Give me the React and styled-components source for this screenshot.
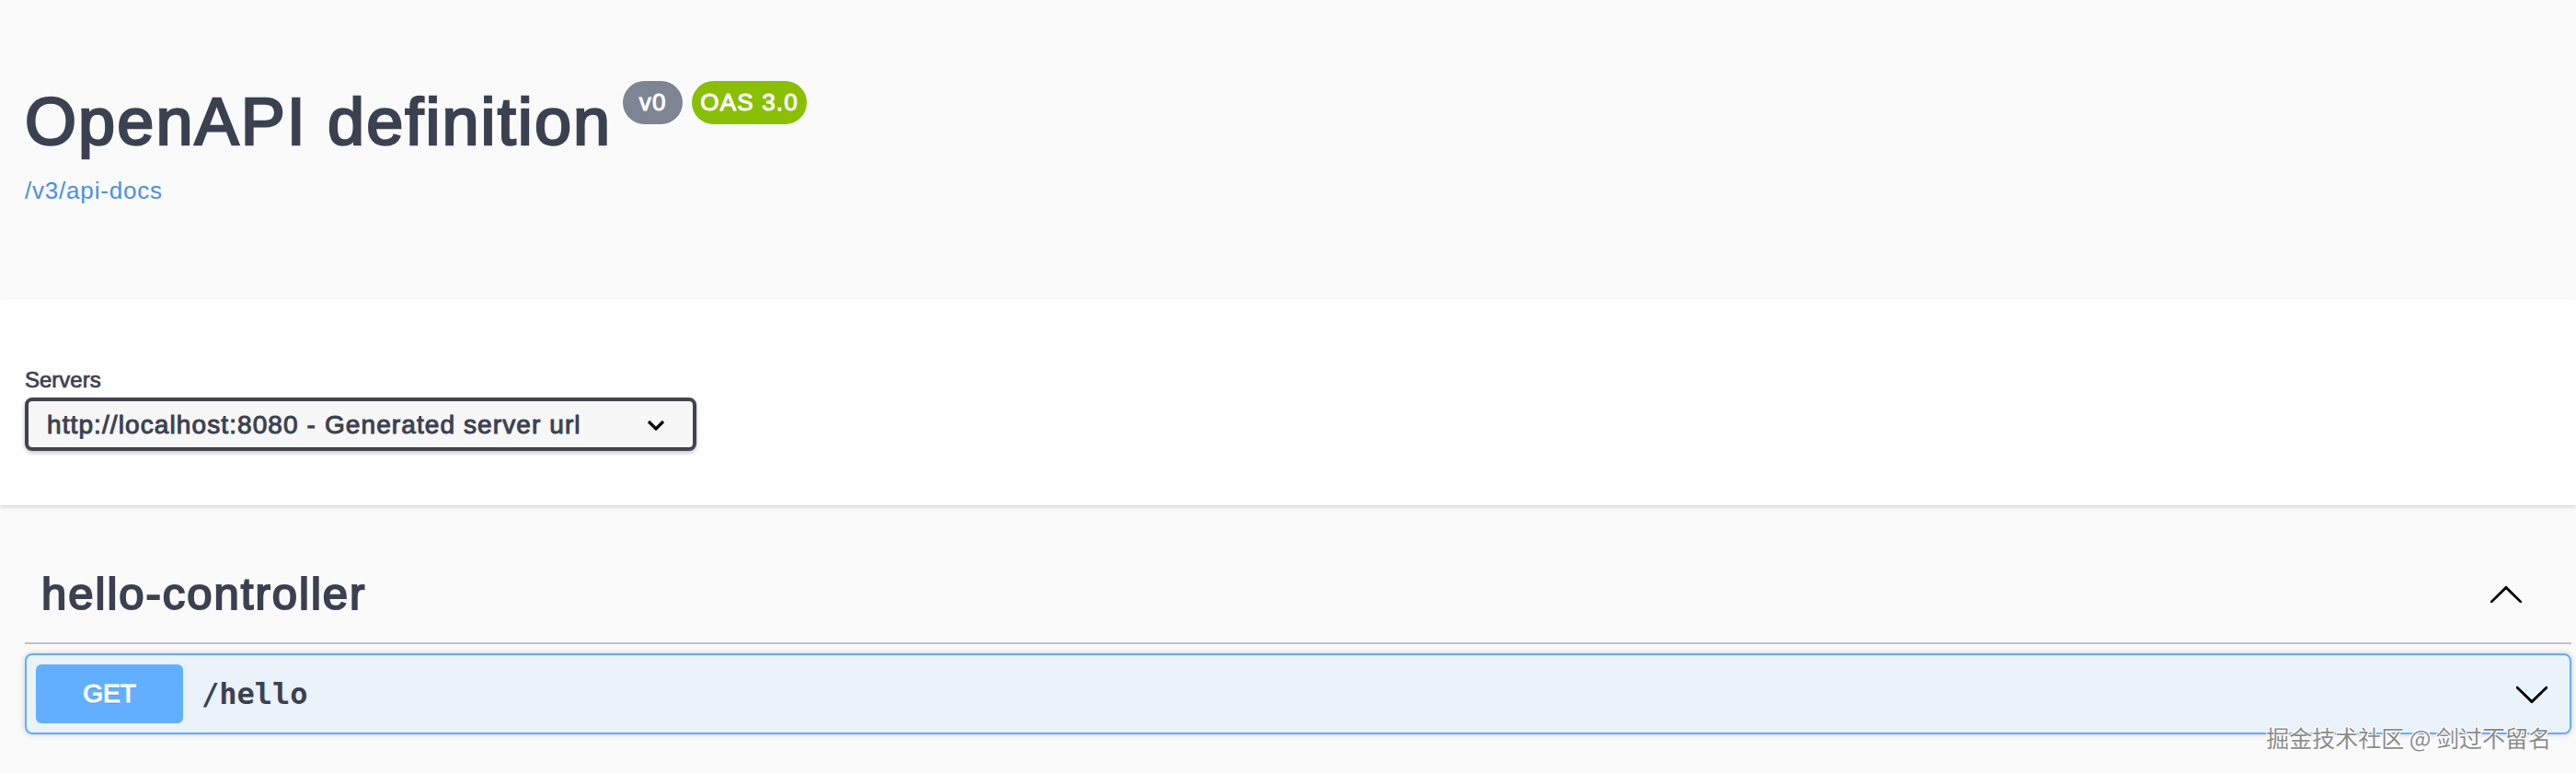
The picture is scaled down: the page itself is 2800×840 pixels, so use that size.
import React from "react";
import styled, { createGlobalStyle, css } from "styled-components";

const GlobalStyle = createGlobalStyle`
  html, body {
    margin: 0;
    padding: 0;
    background: #fafafa;
  }
  body {
    font-family: "Liberation Sans", Arial, sans-serif;
    color: #3b4151;
  }
`;

// the screenshot's "bold" is a medium weight: regular glyphs with a thin stroke
const medium = (w) => css`
  font-weight: 400;
  -webkit-text-stroke: ${w}px currentColor;
`;

const Page = styled.div`
  position: relative;
  min-height: 840px;
  background: #fafafa;
`;

// Info header
const InfoHeader = styled.header`
  background: #fafafa;
  padding: 88px 0 103px 27px;
`;

const TitleRow = styled.div`
  display: flex;
  align-items: flex-start;
`;

const Title = styled.h2`
  margin: 8px 0 0;
  font-size: 72px;
  line-height: 72px;
  letter-spacing: 2.1px;
  color: #3b4151;
  ${medium(2.5)}
`;

const Badge = styled.small`
  display: inline-flex;
  align-items: center;
  justify-content: center;
  box-sizing: border-box;
  height: 47px;
  min-width: 65px;
  padding: 0 9px;
  margin-left: ${(p) => p.$gap}px;
  border-radius: 57px;
  background: ${(p) => p.$bg};
  color: #fff;
  font-size: 26px;
  letter-spacing: 1.2px;
  ${medium(1)}
`;

const DocsLink = styled.a`
  display: inline-block;
  margin-top: 24px;
  font-size: 26px;
  line-height: 30px;
  letter-spacing: 0.8px;
  color: #4990e2;
  text-decoration: none;
`;

// Servers bar
const SchemeBar = styled.section`
  background: #fff;
  box-shadow: 0 2px 4px 0 rgba(0, 0, 0, 0.15);
  padding: 74px 27px 59px;
`;

const Label = styled.label`
  display: block;
  margin-bottom: 5px;
  font-size: 24px;
  line-height: 28px;
  color: #3b4151;
  ${medium(0.7)}
`;

const SelectWrap = styled.div`
  position: relative;
  width: 730px;
`;

const Select = styled.select`
  appearance: none;
  display: block;
  box-sizing: border-box;
  width: 730px;
  height: 58px;
  padding: 0 80px 0 20px;
  border: 4px solid #41444e;
  border-radius: 8px;
  background: #f7f7f7;
  box-shadow: 0 2px 4px 0 rgba(0, 0, 0, 0.25);
  font-family: "Liberation Sans", Arial, sans-serif;
  font-size: 28px;
  letter-spacing: 1.1px;
  color: #3b4151;
  outline: none;
  ${medium(1)}
`;

const SelectArrow = styled.svg`
  position: absolute;
  right: 34px;
  top: 24px;
  width: 20px;
  height: 12px;
  pointer-events: none;
`;

// Tag section
const TagSection = styled.section`
  padding: 0 5px 0 27px;
`;

const TagHeader = styled.h3`
  display: flex;
  align-items: center;
  justify-content: space-between;
  margin: 0 0 10px;
  padding: 68px 51px 25px 18px;
  border-bottom: 2px solid rgba(59, 65, 81, 0.3);
  font-size: 49px;
  line-height: 56px;
  letter-spacing: 2px;
  color: #3b4151;
  ${medium(2)}
`;

const Arrow = styled.svg`
  flex: none;
  width: 40px;
  height: 40px;
  margin-right: ${(p) => p.$right || 0}px;
  fill: #000;
`;

const OpBlock = styled.div`
  border: 2px solid #61affe;
  border-radius: 8px;
  background: rgba(97, 175, 254, 0.1);
  box-shadow: 0 0 6px rgba(0, 0, 0, 0.19);
`;

const Summary = styled.div`
  display: flex;
  align-items: center;
  padding: 10px;
`;

const Method = styled.span`
  min-width: 160px;
  padding: 12px 0;
  border-radius: 6px;
  background: #61affe;
  color: #fff;
  text-align: center;
  text-shadow: 0 2px 0 rgba(0, 0, 0, 0.1);
  font-size: 28px;
  line-height: 40px;
  ${medium(1.2)}
`;

const Path = styled.span`
  flex: 1;
  padding: 0 20px;
  font-family: "DejaVu Sans Mono", "Liberation Mono", monospace;
  font-size: 32px;
  font-weight: 700;
  color: #3b4151;
`;

const Watermark = styled.div`
  position: absolute;
  top: 787px;
  right: 27px;
  font-family: "Noto Sans CJK SC", "Noto Sans", sans-serif;
  font-size: 25px;
  line-height: 28px;
  color: #8c8c8c;
  text-shadow: 1px 1px 0 #fff, -1px -1px 0 #fff, 1px -1px 0 #fff, -1px 1px 0 #fff;
  white-space: nowrap;
`;

const UP = "M17.418 14.908c.272.268.709.268.979 0s.271-.701 0-.969l-7.908-7.83c-.27-.268-.707-.268-.979 0l-7.908 7.83c-.27.268-.27.701 0 .969.271.268.709.268.979 0L10 7.767l7.418 7.141z";
const DOWN = "M17.418 6.109c.272-.268.709-.268.979 0s.271.701 0 .969l-7.908 7.83c-.27.268-.707.268-.979 0l-7.908-7.83c-.27-.268-.27-.701 0-.969.271-.268.709-.268.979 0L10 13.25l7.418-7.141z";

export default function App() {
  return (
    <Page>
      <GlobalStyle />
      <InfoHeader>
        <TitleRow>
          <Title>OpenAPI definition</Title>
          <Badge $bg="#7d8492" $gap={12}>v0</Badge>
          <Badge $bg="#89bf04" $gap={10}>OAS 3.0</Badge>
        </TitleRow>
        <DocsLink href="#">/v3/api-docs</DocsLink>
      </InfoHeader>

      <SchemeBar>
        <Label htmlFor="servers">Servers</Label>
        <SelectWrap>
          <Select id="servers" defaultValue="local">
            <option value="local">http://localhost:8080 - Generated server url</option>
          </Select>
          <SelectArrow viewBox="0 0 20 12">
            <path d="M2 2l8 8 8-8" fill="none" stroke="#000" strokeWidth="3.2" />
          </SelectArrow>
        </SelectWrap>
      </SchemeBar>

      <TagSection>
        <TagHeader>
          <span>hello-controller</span>
          <Arrow viewBox="0 0 20 20">
            <path d={UP} />
          </Arrow>
        </TagHeader>
        <OpBlock>
          <Summary>
            <Method>GET</Method>
            <Path>/hello</Path>
            <Arrow viewBox="0 0 20 20" $right={11}>
              <path d={DOWN} />
            </Arrow>
          </Summary>
        </OpBlock>
      </TagSection>

      <Watermark>掘金技术社区 @ 剑过不留名</Watermark>
    </Page>
  );
}
